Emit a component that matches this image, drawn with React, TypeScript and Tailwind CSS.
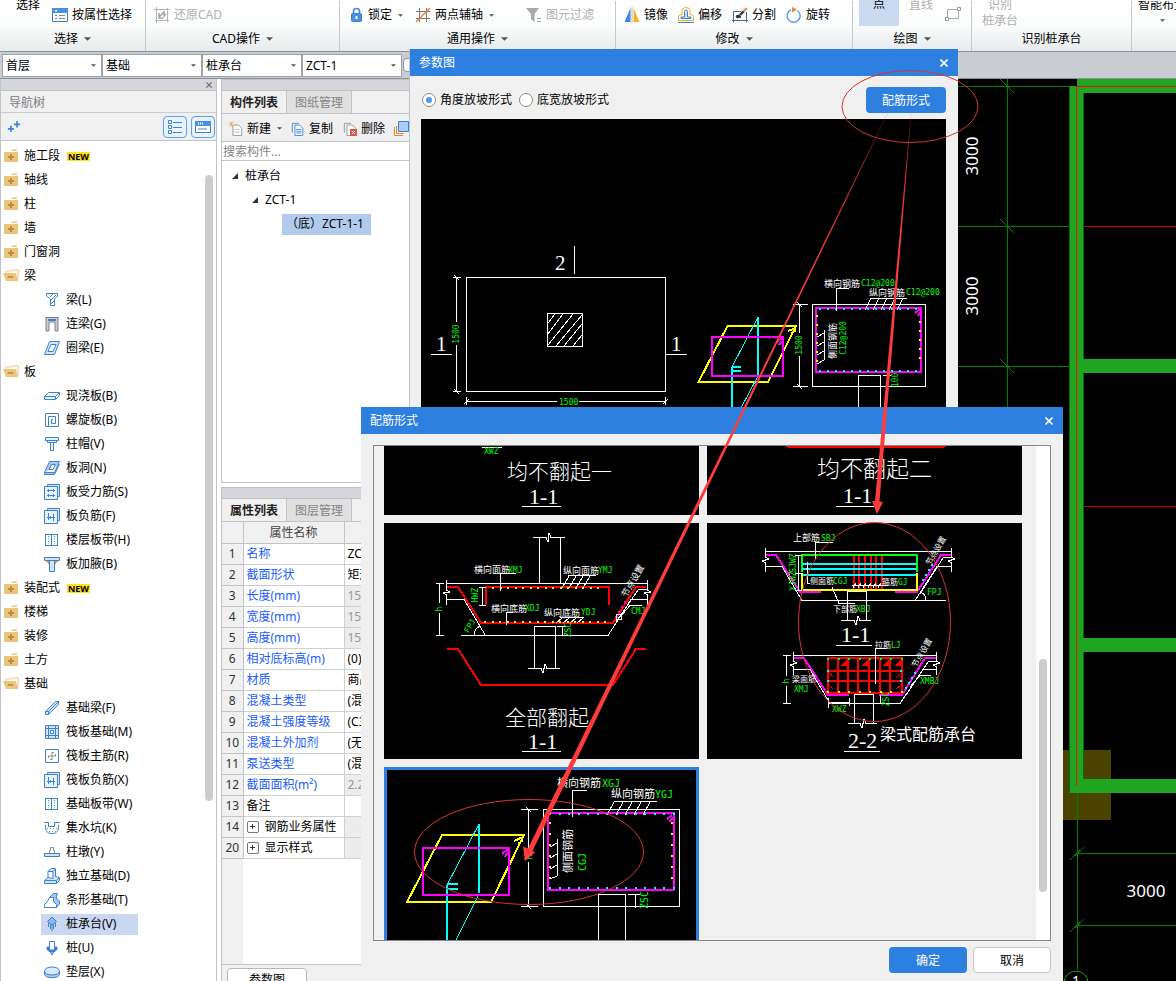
import type { ReactNode } from "react";
import clsx from "clsx";

const BLUE = "#3b82d0";
const PALE = "#d3e4f8";

function Icon({ children, size = 16, className }: { children: ReactNode; size?: number; className?: string }) {
  return (
    <svg
      width={size}
      height={size}
      viewBox="0 0 16 16"
      fill="none"
      stroke={BLUE}
      className={clsx("shrink-0", className)}
      aria-hidden
    >
      {children}
    </svg>
  );
}

function Caret({ small }: { small?: boolean }) {
  return (
    <svg width={small ? 5 : 7} height={small ? 3 : 4} viewBox="0 0 8 4" className="shrink-0" aria-hidden>
      <path d="M0 0H8L4 4Z" fill="#555" />
    </svg>
  );
}

function Close({ size = 8 }: { size?: number }) {
  return (
    <svg width={size} height={size} viewBox="0 0 8 8" stroke="currentColor" strokeWidth="1.6" aria-hidden>
      <path d="M.5 .5L7.5 7.5M7.5 .5L.5 7.5" />
    </svg>
  );
}

/* ---------- ribbon ---------- */

function Tool({ icon, label, menu, disabled }: { icon: ReactNode; label: string; menu?: boolean; disabled?: boolean }) {
  return (
    <button className={clsx("flex h-7 items-center gap-1 whitespace-nowrap", disabled && "text-[#b0b0b0]")}>
      {icon}
      {label}
      {menu && (
        <span className="ml-0.5">
          <Caret small />
        </span>
      )}
    </button>
  );
}

function Group({
  label,
  menu = true,
  width,
  children,
}: {
  label?: string;
  menu?: boolean;
  width: string;
  children: ReactNode;
}) {
  return (
    <section className={clsx("flex shrink-0 flex-col border-r border-[#c6c8ca]", width)}>
      <div className="flex h-7 items-start">{children}</div>
      {label && (
        <button className="flex h-5 items-center justify-center gap-1.5">
          {label}
          {menu && <Caret />}
        </button>
      )}
    </section>
  );
}

function Ribbon() {
  return (
    <header className="flex h-[51px] shrink-0 overflow-hidden bg-linear-to-b from-white via-[#fbfcfc] to-[#e6ebeb] pt-px">
      <Group label="选择" width="w-[146px]">
        <button className="-mt-1.5 mr-3 ml-4 h-5">选择</button>
        <Tool
          label="按属性选择"
          icon={
            <Icon>
              <path d="M.5 1.5H15.5V14.5H.5Z" fill="#fff" />
              <path d="M0 1H16V6H0Z" fill="#4a90e2" stroke="none" />
              <path d="M2.500 3L5.500 3L4 5Z" fill="#fff" stroke="none" />
              <path d="M3 8.500H5M7 8.500H13M3 11.500H5M7 11.500H13" stroke="#888" />
            </Icon>
          }
        />
      </Group>
      <Group label="CAD操作" width="w-[194px]">
        <div className="pl-2">
          <Tool
            disabled
            label="还原CAD"
            icon={
              <Icon>
                <path d="M2.500 0V16M0 2.500H16M13.500 1V15M1 13.500H15" stroke="#b5b5b5" />
                <path d="M5 10L10 5V9L12 7M5 6V11H9" stroke="#a5a5a5" strokeWidth="1.5" />
              </Icon>
            }
          />
        </div>
      </Group>
      <Group label="通用操作" width="w-[276px]">
        <div className="flex gap-3 pl-2">
          <Tool
            menu
            label="锁定"
            icon={
              <Icon>
                <path d="M5.500 7V4.500a3 3 0 0 1 6 0V7" stroke="#4a86d8" strokeWidth="1.6" />
                <rect x="3.500" y="6.500" width="10" height="8" rx="1" fill="#4a8fe2" stroke="#3b7fd0" />
                <path d="M8.500 9V12" stroke="#fff" strokeWidth="2" />
              </Icon>
            }
          />
          <Tool
            menu
            label="两点辅轴"
            icon={
              <Icon>
                <path d="M4.500 1V15M11.500 1V15M1 4.500H15M1 11.500H15" stroke="#777" />
                <path d="M1 15L15 1" stroke="#e8833a" strokeWidth="1.4" />
              </Icon>
            }
          />
          <div className="pl-5">
            <Tool
              disabled
              label="图元过滤"
              icon={
                <Icon>
                  <path d="M0 1H13L8.500 7V15L5 12V7Z" fill="#a9a9a9" stroke="none" />
                  <path d="M11 11.500H15M11 14.500H15" stroke="#a9a9a9" />
                </Icon>
              }
            />
          </div>
        </div>
      </Group>
      <Group label="修改" width="w-[237px]">
        <div className="flex gap-2.5 pl-2">
          <Tool
            label="镜像"
            icon={
              <Icon>
                <path d="M6.500 1V15H.500Z" fill="#3f87dc" stroke="none" />
                <path d="M9.500 1V15H15.500Z" fill="#f7b128" stroke="none" />
                <path d="M8 0V16" stroke="#bbb" />
              </Icon>
            }
          />
          <Tool
            label="偏移"
            icon={
              <Icon>
                <path d="M.5 13.500V9.500Q.500 7.500 4 7.500V4a4 3.500 0 0 1 8 0V7.500Q15.500 7.500 15.500 9.500V13.500Z" stroke="#f2ab27" />
                <path d="M3 11.500V10H6.500V4.500a1.500 1.500 0 0 1 3 0V10H13V11.500Z" fill={PALE} />
                <path d="M0 15.500H16" />
              </Icon>
            }
          />
          <Tool
            label="分割"
            icon={
              <Icon>
                <path d="M9 4.500H1.500V13.500H14.500V5" stroke="#44679e" />
                <path d="M0 13.500H16M1.500 12V15.500M14.500 12V15.500" stroke="#44679e" />
                <path d="M4 9L7 8L9 10L5 11Z" fill="#333" stroke="#333" />
                <path d="M8 8L12 4" stroke="#333" strokeWidth="2.400" />
                <path d="M11.500 4.500L15 1" stroke="#d9946a" strokeWidth="2.400" />
              </Icon>
            }
          />
          <Tool
            label="旋转"
            icon={
              <Icon>
                <path d="M11.500 3.500A6.500 6.500 0 1 1 5 2.800" stroke="#5a9be4" strokeWidth="1.400" />
                <path d="M6 0L11 2.500L6 5.500Z" fill="#f08a24" stroke="none" />
              </Icon>
            }
          />
        </div>
      </Group>
      <Group label="绘图" width="w-[119px]">
        <button className="-mt-px ml-1.5 flex h-[26px] w-10 items-start justify-center bg-[#c9d9f0]">
          <span className="-mt-1 h-5">点</span>
        </button>
        <button className="-mt-1.5 ml-2.5 h-5 text-[#b0b0b0]">直线</button>
        <Icon className="mt-[5px] ml-3">
          <path d="M2.500 3.500H13.500V12.500H2.500Z" stroke="#aaa" />
          <path d="M12.500 1.500H15.500V4.500H12.500ZM.500 11.500H3.500V14.500H.500Z" fill="#fff" stroke="#999" />
        </Icon>
      </Group>
      <Group label="识别桩承台" menu={false} width="w-[160px]">
        <button className="-mt-1 ml-2.5 leading-4 text-[#b0b0b0]">
          识别
          <br />
          桩承台
        </button>
      </Group>
      <section className="flex flex-1 flex-col items-start overflow-hidden pl-1.5">
        <button className="-mt-1.5 h-5 whitespace-nowrap">智能布置</button>
        <span className="mt-1 ml-[22px]">
          <Caret small />
        </span>
      </section>
    </header>
  );
}

function Pick({ label, value }: { label: string; value: string }) {
  return (
    <div className="relative w-[100px]">
      <select
        aria-label={label}
        className="block h-[23px] w-full appearance-none border border-[#9fa2a6] bg-white pt-px pl-[3px] text-black"
        defaultValue={value}
      >
        <option>{value}</option>
      </select>
      <span className="pointer-events-none absolute top-2.5 right-1.5 flex">
        <Caret small />
      </span>
    </div>
  );
}

/* ---------- navigation tree ---------- */

const slabBars = (d: string) => (
  <>
    <path d="M3.500 2.500V.5H15.500V12.500H13.500" fill={PALE} />
    <path d="M.5 2.500H13.500V15.500H.5Z" fill="#eaf3fd" />
    <path d={d} />
  </>
);

const strip = (
  <>
    <path d="M1 2.500H14M1 13.500H14M1.500 3V13M7.500 3V13M13.500 3V13" fill={PALE} />
    <path d="M4.500 4V12M10.500 4V12" strokeDasharray="1 1.500" />
  </>
);

const icons: Record<string, ReactNode> = {
  beam: <path d="M2.500 1.500H13.500V4L10.500 7V13.500H6.500V7L2.500 4ZM6 5L9 2M7 12L10 9M7 8L12 3" />,
  link: (
    <>
      <path d="M2 1.500H14V15H11V6H5V15H2Z" fill="#c9ccd1" stroke="#7c838c" />
      <path d="M4 4H12" strokeWidth="2" />
    </>
  ),
  ring: (
    <>
      <path d="M5.500 1.500H15.500L10.500 14.500H.5Z" fill={PALE} />
      <path d="M7 4.500H12L9 11.500H4Z" fill="#fff" />
    </>
  ),
  slab: <path d="M.5 8.500L4.500 4.500H15.500L11.500 8.500ZM.5 8.500V11.500H11.500V8.500M11.500 11.500L15.500 7.500V4.500" fill="#eaf3fd" />,
  spiral: <path d="M1.500 1.500H14.500V14.500H4.500V4.500H11.500V11.500H7.500V7.500H9M1.500 1.500V14.500H4" />,
  cap: <path d="M1.500 1.500H14.500V4.500H1.500ZM3.500 4.500V6.500H12.500V4.500M6.500 6.500V14.500H9.500V6.500" fill="#eaf3fd" />,
  hole: (
    <>
      <path d="M5.500 1.500H15.500L10.500 12.500H.5ZM.5 12.500V14.500H10.500L15.500 4" fill="#a9c8ee" />
      <path d="M7.500 4.500H11.500L9 9.500H5Z" fill="#fff" />
    </>
  ),
  rebar: slabBars("M3 6.500H11M3 11.500H11M4.500 5V8M9.500 5V8M4.500 10V13M9.500 10V13"),
  neg: slabBars("M4.500 5V12M9.500 6V13M3 9.500H11M6.500 8V11"),
  strip,
  haunch: (
    <>
      <path d="M2 5H14L9 11H7Z" fill="#f08a24" stroke="none" />
      <path d="M.5 1.500H15.500V4.500H.5ZM5.500 4.500V15.500H10.500V4.500" fill={PALE} />
    </>
  ),
  fbeam: <path d="M1.500 11.500L11.500 1.500H14.500V4.500L4.500 14.500H1.500ZM1.500 11.500H4.500V14.500M4.500 11.500L14.500 1.500" fill={PALE} />,
  raft: (
    <>
      <path d="M1.500 1.500H14.500V14.500H1.500ZM4.500 1V15M11.500 1V15M1 4.500H15M1 11.500H15" fill={PALE} />
      <path d="M6.500 6.500H9.500V9.500H6.500Z" fill="#fff" />
    </>
  ),
  main: (
    <>
      <path d="M1.500 1.500H14.500V14.500H1.500Z" />
      <path d="M8 4V12M4 8H12M8 4.500H10M6 11.500H8M4.500 8V10M11.500 6V8" stroke="#8a9096" />
    </>
  ),
  pit: (
    <>
      <path d="M0 2.500H4.500V6.500H10.500V2.500H16M1.500 5V7C2 13 5 13.500 8 13.500S14 13 14.500 7V5" />
      <path d="M3 8.500H14M5 11.500H12" strokeDasharray="1 2" stroke="#888" />
    </>
  ),
  pier: (
    <>
      <path d="M5.500 9V6.500H6.500V3.500H9.500V6.500H10.500V9" stroke="#8a9096" />
      <path d="M.5 9.500H15.500V12.500H.5Z" fill={PALE} />
    </>
  ),
  iso: <path d="M.5 12.500L4 9.500V3.500L7 .500H11.500V8.500L15.500 9.500V12.500L12.500 15.500H.5ZM4 9.500L9 10.500V3.500H4M9 3.500L11.500 1M.5 12.500H12.500V15M12.500 12.500L15 10" fill={PALE} />,
  stripf: (
    <>
      <path d="M5.500 5.500L9.500 1.500H13.500L12 6L15.500 9V12L12.500 15.500" fill="#a9c8ee" />
      <path d="M.5 15.500V12.500L3.500 9.500L5.500 5.500H9.500V9.500L12.500 12.500V15.500Z" fill="#fff" />
    </>
  ),
  pilecap: (
    <>
      <path d="M8 1L12.500 5.500L8 9L3.500 5.500Z" fill="#8fb8ea" />
      <path d="M8 9V15M4.500 7V11M11.500 7V11M6.500 8V13M9.500 8V13" />
    </>
  ),
  pile: (
    <>
      <path d="M5.500 1.500H10.500V10L8 15L5.500 10Z" fill="#fff" />
      <path d="M3 7H5V10H11V7H13V9.500L10 12H6L3 9.500Z" fill={BLUE} />
    </>
  ),
  cushion: (
    <>
      <path d="M.5 7V10C.5 15 15.500 15 15.500 10V7" fill="#a9c8ee" />
      <ellipse cx="8" cy="7" rx="7.500" ry="4" fill="#dbe9fa" />
    </>
  ),
};

type Row = { label: string; icon?: string; open?: boolean; fresh?: boolean; active?: boolean };

const navRows: Row[] = [
  { label: "施工段", fresh: true },
  { label: "轴线" },
  { label: "柱" },
  { label: "墙" },
  { label: "门窗洞" },
  { label: "梁", open: true },
  { label: "梁(L)", icon: "beam" },
  { label: "连梁(G)", icon: "link" },
  { label: "圈梁(E)", icon: "ring" },
  { label: "板", open: true },
  { label: "现浇板(B)", icon: "slab" },
  { label: "螺旋板(B)", icon: "spiral" },
  { label: "柱帽(V)", icon: "cap" },
  { label: "板洞(N)", icon: "hole" },
  { label: "板受力筋(S)", icon: "rebar" },
  { label: "板负筋(F)", icon: "neg" },
  { label: "楼层板带(H)", icon: "strip" },
  { label: "板加腋(B)", icon: "haunch" },
  { label: "装配式", fresh: true },
  { label: "楼梯" },
  { label: "装修" },
  { label: "土方" },
  { label: "基础", open: true },
  { label: "基础梁(F)", icon: "fbeam" },
  { label: "筏板基础(M)", icon: "raft" },
  { label: "筏板主筋(R)", icon: "main" },
  { label: "筏板负筋(X)", icon: "neg" },
  { label: "基础板带(W)", icon: "strip" },
  { label: "集水坑(K)", icon: "pit" },
  { label: "柱墩(Y)", icon: "pier" },
  { label: "独立基础(D)", icon: "iso" },
  { label: "条形基础(T)", icon: "stripf" },
  { label: "桩承台(V)", icon: "pilecap", active: true },
  { label: "桩(U)", icon: "pile" },
  { label: "垫层(X)", icon: "cushion" },
];

function Folder({ open }: { open?: boolean }) {
  return (
    <Icon>
      {open ? (
        <>
          <path d="M3 5V3H8L9 2H15V12" fill="#fff" stroke="#ecc47c" />
          <path d="M0 5H13L15 13H3Z" fill="#ecc47c" stroke="none" />
          <path d="M5 9H10" stroke="#a8803a" strokeWidth="1.400" />
        </>
      ) : (
        <>
          <path d="M1 4H15V14H1Z" fill="#ecc47c" stroke="none" />
          <path d="M8 3L9 1.500H14V3Z" fill="#ecc47c" stroke="none" />
          <path d="M5 9H11M8 6V12" stroke="#b98f45" strokeWidth="2" />
        </>
      )}
    </Icon>
  );
}

function NavTree() {
  return (
    <aside className="flex w-[217px] shrink-0 flex-col border-x border-[#c0c3c8] bg-[#f0f0f0]">
      <div className="flex h-3 shrink-0 items-center justify-end border-b border-[#c0c3c8] bg-[#d4d6db] pr-1 text-[#6d7075]">
        <button aria-label="关闭">
          <Close size={6} />
        </button>
      </div>
      <h2 className="h-[22px] shrink-0 border-b border-[#c9ccd1] pl-2 leading-[23px] text-[#7a7d82]">导航树</h2>
      <div className="flex h-7 shrink-0 items-center border-b border-[#c0c3c8] pl-1.5">
        <Icon size={14} className="mr-auto">
          <path d="M1 10H8M4.500 6.500V13.500M8 5H15M11.500 1.500V8.500" stroke="#3f82d6" strokeWidth="2" />
        </Icon>
        <button aria-label="列表" className="flex h-[22px] w-6 items-center justify-center rounded-sm border border-[#5aa2ee] bg-[#e9f3fe]">
          <Icon>
            <path d="M1.500 1.500H4.500V4.500H1.500ZM1.500 6.500H4.500V9.500H1.500ZM1.500 11.500H4.500V14.500H1.500ZM6 3.500H15M6 8.500H15M6 13.500H15" />
          </Icon>
        </button>
        <button aria-label="分组" className="mr-px ml-1 flex h-[22px] w-6 items-center justify-center rounded-sm border border-[#5aa2ee] bg-[#e9f3fe]">
          <Icon>
            <path d="M.5 2.500H15.500V13.500H.5Z" fill="#fff" />
            <path d="M0 2H16V7H0Z" fill="#4a90e2" stroke="none" />
            <path d="M3 4.500H8" stroke="#fff" strokeDasharray="1 1" strokeWidth="2" />
            <path d="M3 10H12" />
          </Icon>
        </button>
      </div>
      <div className="flex min-h-0 flex-1 bg-white">
        <ul className="flex-1 overflow-hidden pt-[3px]">
          {navRows.map((row, i) => (
            <li key={i} className={clsx("flex h-6 items-center", row.icon ? "pl-10" : "pl-0.5")}>
              <div
                className={clsx(
                  "flex items-center",
                  row.icon ? "h-[21px] gap-1.5 pr-[22px] pl-[3px]" : "gap-[5px]",
                  row.active && "bg-[#c8d8f0]",
                )}
              >
                {row.icon ? <Icon>{icons[row.icon]}</Icon> : <Folder open={row.open} />}
                <span className="whitespace-nowrap">{row.label}</span>
                {row.fresh && <b className="ml-0.5 bg-[#ffe11a] px-px text-[9px] leading-[9px]">NEW</b>}
              </div>
            </li>
          ))}
        </ul>
        <div className="mt-[34px] mr-[3px] h-[626px] w-2 rounded-full bg-[#cdcdcd]" />
      </div>
    </aside>
  );
}

/* ---------- component list and properties ---------- */

function Tabs({ active, other }: { active: string; other: string }) {
  return (
    <div className="flex h-[23px] shrink-0 border-b border-[#c0c3c8] bg-[#f0f0f0]">
      <button className="w-[65px] border-r border-[#c0c3c8] pt-px font-bold text-[#222]">{active}</button>
      <button className="w-[65px] border-r border-[#c0c3c8] bg-[#e0e0e0] pt-px text-[#858585]">{other}</button>
    </div>
  );
}

const props: [number, string, string, ("blue" | "fold" | "plain")?, boolean?][] = [
  [1, "名称", "ZCT-1", "blue"],
  [2, "截面形状", "矩形", "blue"],
  [3, "长度(mm)", "1500", "blue", true],
  [4, "宽度(mm)", "1500", "blue", true],
  [5, "高度(mm)", "1500", "blue", true],
  [6, "相对底标高(m)", "(0)", "blue"],
  [7, "材质", "商品混凝土", "blue"],
  [8, "混凝土类型", "(混凝土)", "blue"],
  [9, "混凝土强度等级", "(C30)", "blue"],
  [10, "混凝土外加剂", "(无)", "blue"],
  [11, "泵送类型", "(混凝土泵)", "blue"],
  [12, "截面面积(m²)", "2.25", "blue", true],
  [13, "备注", "", "plain"],
  [14, "钢筋业务属性", "", "fold", true],
  [20, "显示样式", "", "fold", true],
];

function Sheet() {
  const file = <path d="M4.500 3.500H11L14.500 7V15.500H4.500Z" fill="#fff" stroke="#8a929b" />;
  return (
    <div className="ml-1 flex w-[320px] shrink-0 flex-col">
      <section className="mb-1 flex h-[404px] shrink-0 flex-col border border-[#c0c3c8] bg-white">
        <div className="h-[11px] shrink-0 border-b border-[#c0c3c8] bg-[#d4d6db]" />
        <Tabs active="构件列表" other="图纸管理" />
        <div className="flex h-7 shrink-0 items-center border-b border-[#c0c3c8] bg-[#f0f0f0] pt-0.5 pl-[7px]">
          <button className="flex items-center gap-1">
            <Icon size={14}>
              {file}
              <path d="M6 8.500H12M6 11.500H12" stroke="#bbb" />
              <path d="M0 0L5 5M5 0L0 5M2.500 0V5" stroke="#f0a030" />
            </Icon>
            <span className="mr-0.5">新建</span>
            <Caret small />
          </button>
          <button className="ml-[9px] flex items-center gap-1">
            <Icon size={14}>
              <path d="M1.500 12V1.500H9" />
              <path d="M4.500 3.500H10L13.500 7V15.500H4.500Z" fill="#fff" />
              <path d="M6 8.500H12M6 10.500H12M6 12.500H12" />
            </Icon>
            复制
          </button>
          <button className="ml-2.5 flex items-center gap-1">
            <Icon size={14}>
              <path d="M1.500 12V1.500H9" stroke="#8a929b" />
              {file}
              <path d="M8 8H16V16H8Z" fill="#d9534f" stroke="none" />
              <path d="M10 10L14 14M14 10L10 14" stroke="#fff" />
            </Icon>
            删除
          </button>
          <Icon className="ml-2">
            <path d="M1.500 6V14.500H10M3.500 5V12.500H11" stroke="#e8833a" />
            <path d="M5.500 .5H15.500V10.500H5.500Z" fill="#a9cdf8" />
          </Icon>
        </div>
        <input
          aria-label="搜索构件"
          placeholder="搜索构件..."
          className="block h-[19px] w-full shrink-0 border-b border-[#c0c3c8] px-px placeholder:text-[#858585]"
        />
        <ul className="pt-[3px]">
          <li className="flex h-6 items-center gap-[7px] pl-2.5">
            <svg width="6" height="6" aria-hidden>
              <path d="M6 0V6H0Z" fill="#333" />
            </svg>
            桩承台
          </li>
          <li className="flex h-6 items-center gap-[7px] pl-[30px]">
            <svg width="6" height="6" aria-hidden>
              <path d="M6 0V6H0Z" fill="#333" />
            </svg>
            ZCT-1
          </li>
          <li className="flex h-6 items-center pl-[60px]">
            <span className="h-[21px] bg-[#b1cbec] pr-[7px] pl-1 leading-5">（底）ZCT-1-1</span>
          </li>
        </ul>
      </section>
      <section className="flex min-h-0 flex-1 flex-col border-x border-t border-[#c0c3c8] bg-[#f0f0f0]">
        <div className="h-[11px] shrink-0 border-b border-[#c0c3c8] bg-[#d4d6db]" />
        <Tabs active="属性列表" other="图层管理" />
        <div className="flex min-h-0 flex-1 flex-col border-b border-[#c0c3c8] bg-linear-to-r from-[#f0f0f0] from-[21px] to-white to-[21px]">
          <table className="w-full table-fixed border-collapse bg-white">
            <thead>
              <tr className="h-[21px] bg-[#f0f0f0]">
                <th className="w-[21px] border-r border-b border-[#c0c3c8] p-0" />
                <th className="w-[101px] border-r border-b border-[#c0c3c8] p-0 pt-px font-normal text-[#444]">属性名称</th>
                <th className="border-b border-[#c0c3c8] p-0 pt-px font-normal text-[#444]">属性值</th>
              </tr>
            </thead>
            <tbody>
              {props.map(([no, name, value, kind, dim]) => (
                <tr key={no} className="h-[21px]">
                  <td className="border-r border-b border-[#c0c3c8] bg-[#f0f0f0] p-0 text-center leading-5 text-[#333]">{no}</td>
                  <td
                    className={clsx(
                      "border-r border-b border-[#cfcfcf] p-0 pl-[3px] leading-5 whitespace-nowrap",
                      kind === "blue" && "text-[#1a5cff]",
                    )}
                  >
                    <span className="flex items-center gap-1.5">
                      {kind === "fold" && (
                        <button
                          aria-label={name}
                          className="flex size-3 items-center justify-center rounded-xs border border-[#777] bg-white"
                        >
                          <svg width="5" height="5" stroke="#333" aria-hidden>
                            <path d="M0 2.500H5M2.500 0V5" />
                          </svg>
                        </button>
                      )}
                      {name}
                    </span>
                  </td>
                  <td
                    className={clsx(
                      "border-b border-[#cfcfcf] p-0 pl-[3px] leading-5 whitespace-nowrap",
                      dim && "bg-[#ececec] text-[#9a9a9a]",
                    )}
                  >
                    {value}
                  </td>
                </tr>
              ))}
            </tbody>
          </table>
        </div>
        <div className="h-4 shrink-0 overflow-hidden pt-[3px] pl-[5px]">
          <button className="h-6 w-20 rounded-sm border border-[#b5b8bc] bg-white">参数图</button>
        </div>
      </section>
    </div>
  );
}

/* ---------- drawing helpers ---------- */

type LabelProps = {
  x: number;
  y: number;
  children: string;
  size?: number;
  fill?: string;
  rot?: number;
  serif?: boolean;
};

// upright labels start at x, turned ones are centred on x,y
function Label({ x, y, children, size = 9, fill = "#fff", rot, serif }: LabelProps) {
  return (
    <text
      x={x}
      y={y}
      fontSize={size}
      fill={fill}
      stroke="none"
      dominantBaseline="central"
      textAnchor={rot ? "middle" : "start"}
      transform={rot ? `rotate(${rot} ${x} ${y})` : undefined}
      className={clsx(
        serif
          ? "font-['Liberation_Serif','Noto_Sans_CJK_SC',serif]"
          : "font-['DejaVu_Sans_Mono','Noto_Sans_CJK_SC',monospace]",
        size > 20 && "font-light",
      )}
    >
      {children}
    </text>
  );
}

function Green(p: LabelProps) {
  return <Label size={8} fill="#0f0" {...p} />;
}

function Drawing({ box, children, className }: { box: string; children: ReactNode; className?: string }) {
  return (
    <svg
      viewBox={box}
      preserveAspectRatio="xMinYMin slice"
      fill="none"
      stroke="#fff"
      shapeRendering="crispEdges"
      className={clsx("block bg-black", className)}
    >
      {children}
    </svg>
  );
}

const range = (n: number) => Array.from({ length: n }, (_, i) => i);

function Dots({ x, y, n, dx = 0, dy = 0, fill }: { x: number; y: number; n: number; dx?: number; dy?: number; fill: string }) {
  return (
    <>
      {range(n).map((i) => (
        <rect key={i} x={Math.round(x + dx * i) - 1} y={Math.round(y + dy * i) - 1} width="2" height="2" fill={fill} stroke="none" />
      ))}
    </>
  );
}

function Slashes({ x, y, n, step, dx, dy }: { x: number; y: number; n: number; step: number; dx: number; dy: number }) {
  return <path d={range(n).map((i) => `M${x + step * i} ${y}l${dx} ${dy}`).join("")} />;
}

function PlanDrawing() {
  return (
    <Drawing box="421 119 525 300" className="h-[300px] w-full">
      <path d="M466.500 277.500H665.500V391.500H466.500ZM547.500 313.500H582.500V346.500H547.500Z" />
      <path d="M548 323L555 314M548 334L563 314M548 345L573 314M556 346L582 315M564 346L582 324M573 346L582 335" />
      <path d="M456.500 277V322M456.500 345V392M453 277.500H461M453 391.500H461M454 275L459 280M454 389L459 394" />
      <path d="M466 401.500H557M579 401.500H666M466.500 397V405M665.500 397V405M464 404L469 399M663 404L668 399" />
      <path d="M431 354.500H452M666 354.500H687M574.500 246V274" />
      <Green x={456} y={334} rot={-90}>1500</Green>
      <Green x={559} y={402}>1500</Green>
      <Label x={436} y={344} size={21} serif>1</Label>
      <Label x={671} y={344} size={21} serif>1</Label>
      <Label x={555} y={263} size={21} serif>2</Label>

      <path d="M727.500 326H796L768 382H698.500Z" stroke="#ff0" strokeWidth="2" />
      <path d="M796 328L788 331M796 330L791 334" stroke="#ff0" strokeWidth="2" />
      <path d="M758 317L732 367M758 376L741 408" stroke="#0ff" />
      <path d="M758 375V317M732 367V410M733 367H741M733 371H741" stroke="#0ff" strokeWidth="2" />
      <path d="M712 337H783V376H712ZM782 338L777 342M782 341L779 345" stroke="#f0f" strokeWidth="2" />

      <path d="M812.500 304.500H925.500V386.500H812.500ZM858.500 408V375.500H880.500V408M883 375.500H891" />
      <path d="M816 308H921V372H816ZM920 309L915 313M920 312L918 316" stroke="#f0f" strokeWidth="2" />
      <Dots x={820} y={309} dx={8} n={13} fill="#0ff" />
      <Dots x={820} y={371} dx={8} n={13} fill="#0ff" />
      <Dots x={817} y={316} dy={9} n={6} fill="#ff0" />
      <Dots x={920} y={322} dy={9} n={5} fill="#ff0" />
      <path d="M799.500 304V333M799.500 356V387M793 304.500H808M793 386.500H808M797 302L802 307M797 384L802 389" />
      <path d="M836.500 311V288.500H849M870 298.500H907M824.500 330V360" />
      <Slashes x={871} y={298} n={5} step={8} dx={-6} dy={12} />
      <path d="M824 333L817 337M824 342L817 346M824 351L817 355M824 360L817 364" />
      <Green x={799} y={345} rot={-90}>1500</Green>
      <Label x={824} y={284}>横向钢筋</Label>
      <Green x={861} y={283}>C12@200</Green>
      <Label x={869} y={293}>纵向钢筋</Label>
      <Green x={906} y={292}>C12@200</Green>
      <Label x={833} y={341} rot={-90}>侧面钢筋</Label>
      <Green x={843} y={338} rot={-90}>C12@200</Green>
      <Green x={895} y={380} rot={-90}>100</Green>
    </Drawing>
  );
}

function FlatOne() {
  return (
    <Drawing box="384 446 315 69" className="h-[69px] w-full">
      <path d="M482 447.500H502M522 506.500H561" />
      <Green x={484} y={451}>XWZ</Green>
      <Label x={507} y={472} size={21}>均不翻起一</Label>
      <Label x={529} y={496} size={22} serif>1-1</Label>
    </Drawing>
  );
}

function FlatTwo() {
  return (
    <Drawing box="707 446 315 69" className="h-[69px] w-full">
      <path d="M786 445L789 447H943L946 445" stroke="#f00" strokeWidth="2" />
      <path d="M836 506.500H874" />
      <Label x={817} y={469} size={23}>均不翻起二</Label>
      <Label x={843} y={495} size={22} serif>1-1</Label>
    </Drawing>
  );
}

function AllUp() {
  return (
    <Drawing box="384 523 315 236" className="h-[236px] w-full">
      <path d="M539.500 583V537.500M560.500 583V537.500M533 537.500H546L548 542L549 533L551 537.500H565" />
      <path d="M446 583.500H648M446.500 580V590L450 592L443 593L446.500 595V605M647.500 580V590L651 592L644 593L647.500 595V605" />
      <path d="M447 599.500H464L485.500 635.500M461 635.500H608L631 599.500H648M638 589.500H648M638 590L616 622" />
      <path d="M447 587H458L481 623H613L636 587H646M486 605V587H608.500V605M447 649H458L481 685H613L636 649H646" stroke="#f00" strokeWidth="2" />
      <Dots x={493} y={588} dx={7.5} n={15} fill="#ff0" />
      <Dots x={485} y={622} dx={7.5} n={17} fill="#ff0" />
      <Dots x={616} y={617} dx={3} dy={-5} n={4} fill="#f0f" />
      <path d="M439.500 583V603M439.500 613V635M436 583.500H444M436 635.500H444M482.500 587V605M479 587.500H486M479 605.500H486" />
      <path d="M516 573.500H500.500V591M568 575.500H596M513 612.500H506.500V625M560 617.500H584M642 605.500H630L619 618" />
      <circle cx="619" cy="617" r="3" />
      <Slashes x={569} y={576} n={4} step={7} dx={-7} dy={12} />
      <Slashes x={562} y={618} n={4} step={7} dx={-6} dy={5} />
      <path d="M474 635Q474 629 480 626M534.500 668V626.500H555.500V668M562.500 626V636M557 626.500H566M528 668.500H541L543 673L545 664L547 668.500H560" />
      <path d="M522 751.500H561" />
      <Label x={474} y={570}>横向面筋</Label>
      <Green x={508} y={570}>XMJ</Green>
      <Label x={563} y={571}>纵向面筋</Label>
      <Green x={598} y={570}>YMJ</Green>
      <Label x={491} y={609}>横向底筋</Label>
      <Green x={525} y={608}>XDJ</Green>
      <Label x={544} y={613}>纵向底筋</Label>
      <Green x={581} y={612}>YDJ</Green>
      <Label x={633} y={581} rot={-60}>节点设置</Label>
      <Green x={631} y={611}>CMJ</Green>
      <Green x={475} y={595} rot={-90}>HWZ</Green>
      <Green x={439} y={609} rot={-90}>h</Green>
      <Green x={470} y={626} rot={-60}>FPJ</Green>
      <Green x={568} y={630} rot={-90}>ZSC</Green>
      <Label x={505} y={718} size={21}>全部翻起</Label>
      <Label x={528} y={741} size={22} serif>1-1</Label>
    </Drawing>
  );
}

function BeamStyle() {
  return (
    <Drawing box="707 523 315 236" className="h-[236px] w-full">
      <path d="M765 551.500H952M765.500 548V557L769 559L762 561L765.500 563V572M951.500 548V557L955 559L948 561L951.500 563V572" />
      <path d="M766 555H776L800 592H821M951 555H941L917 592H895" stroke="#f0f" strokeWidth="2" />
      <path d="M765 566.500H782L802 600.500H946M915 600.500L937 566.500H952M943 557.500H951M943 558L920 594M926 600Q926 594 920 592" />
      <path d="M802 572V555H917V572" stroke="#0f0" strokeWidth="2" />
      <path d="M854 556V590M859 556V590M865 556V590M871 556V590M876 556V590M882 556V590" stroke="#f00" strokeWidth="2" />
      <path d="M802 564H917M802 569H917M802 575H917" stroke="#0ff" strokeWidth="2" />
      <path d="M802 573V590H917V573" stroke="#ff0" strokeWidth="2" />
      <Dots x={923} y={580} dx={3} dy={-5} n={4} fill="#0ff" />
      <path d="M798.500 555V591M795 555.500H802M795 573.500H802M795 590.500H802M833 542.500H815.500V559M807.500 562V583.500H810M852 585.500H888" />
      <Slashes x={856} y={583} n={6} step={5} dx={-3} dy={5} />
      <path d="M832 587L839 603.500H855M847.500 620V591.500H866.500V620M841 620.500H854L856 625L858 616L860 620.500H871M836 645.500H872" />
      <Label x={793} y={538}>上部筋</Label>
      <Green x={821} y={538}>SBJ</Green>
      <Green x={793} y={563} rot={-90}>SJWZ</Green>
      <Green x={793} y={581} rot={-90}>XJWZ</Green>
      <Label x={810} y={581} size={8}>侧面筋</Label>
      <Green x={833} y={581}>CGJ</Green>
      <Label x={882} y={582} size={8}>箍筋</Label>
      <Green x={898} y={582}>GJ</Green>
      <Label x={833} y={609} size={8}>下部筋</Label>
      <Green x={856} y={609}>XBJ</Green>
      <Label x={936} y={551} rot={-60} size={8}>节点设置</Label>
      <Green x={927} y={592}>FPJ</Green>
      <Label x={841} y={634} size={22} serif>1-1</Label>

      <path d="M793 655.500H937M793.500 652V661L797 663L790 665L793.500 667V675M936.500 652V661L940 663L933 665L936.500 667V675" />
      <path d="M794 658H804L828 695H849M936 658H925L902 695H879" stroke="#f0f" strokeWidth="2" />
      <path d="M793 669.500H810L830 703.500H900L923 669.500H937M928 661.500H936M928 662L906 695" />
      <path d="M828 658H902V693H828ZM838 658V693M848 658V693M858 658V693M869 658V693M880 658V693M890 658V693M828 671H902M828 681H902" stroke="#f00" strokeWidth="2" />
      <path d="M842 665L848 659V665ZM863 665L869 659V665ZM884 665L890 659V665ZM896 665L902 659V665ZM829 672L833 677M829 685L833 689M901 673L896 678M901 685L896 689" stroke="#f00" fill="#f00" />
      <Dots x={828} y={659} dx={10.5} n={8} fill="#0f0" />
      <Dots x={828} y={671} dx={73} n={2} fill="#0ff" />
      <Dots x={828} y={681} dx={73} n={2} fill="#0ff" />
      <Dots x={828} y={692} dx={10.5} n={8} fill="#ff0" />
      <Dots x={906} y={688} dx={3} dy={-5} n={4} fill="#0ff" />
      <path d="M786.500 655V676M786.500 686V703M783 655.500H791M783 703.500H791M887 648.500H875.500V684M828.500 698V708M849.500 698V706M828 702.500H850M931 675.500H920L910 687" />
      <path d="M880.500 695V704M854.500 723V694.500H873.500V723M848 723.500H860L862 728L864 719L866 723.500H877M844 751.500H880" />
      <Label x={875} y={645} size={8}>拉筋</Label>
      <Green x={891} y={645}>LJ</Green>
      <Label x={922} y={653} rot={-60} size={8}>节点设置</Label>
      <Label x={792} y={679} size={8}>梁面筋</Label>
      <Green x={794} y={689}>XMJ</Green>
      <Green x={786} y={681} rot={-90}>h</Green>
      <Green x={920} y={681}>XMBJ</Green>
      <Green x={832} y={709}>XWZ</Green>
      <Green x={886} y={699} rot={-90}>ZSC</Green>
      <Label x={848} y={740} size={22} serif>2-2</Label>
      <Label x={880} y={734} size={16}>梁式配筋承台</Label>
    </Drawing>
  );
}

function RingStyle() {
  return (
    <Drawing box="387 770 309 236" className="h-[236px] w-full">
      <path d="M442 835H524L491 902H407ZM523 837L514 841M523 840L518 844" stroke="#ff0" strokeWidth="2" />
      <path d="M479 824L447 885M479 894L455 942" stroke="#0ff" />
      <path d="M479 824V893M447 885V1006M448 884H458M448 889H458" stroke="#0ff" strokeWidth="2" />
      <path d="M423 848H509V895H423ZM508 849L502 854M508 852L505 857" stroke="#f0f" strokeWidth="2" />
      <path d="M543.500 809.500H679.500V906.500H543.500ZM598.500 1006V894.500H625.500V1006" />
      <path d="M548 813H674V890H548ZM672 815L667 819M673 818L669 822" stroke="#f0f" strokeWidth="2" />
      <Dots x={550} y={814} dx={9.500} n={14} fill="#0ff" />
      <Dots x={550} y={888} dx={9.500} n={14} fill="#0ff" />
      <Dots x={550} y={823} dy={11} n={6} fill="#ff0" />
      <Dots x={672} y={823} dy={11} n={6} fill="#ff0" />
      <path d="M528.500 809V852M528.500 862V907M521 809.500H538M521 906.500H538M526 807L531 812M526 904L531 909" />
      <path d="M587 790.500H572.500V817M614 801.500H657M557.500 839V876M557 843L550 847M557 854L550 858M557 865L550 869M557 876L550 879" />
      <path d="M635.500 894V908M628 894.500H640" />
      <Slashes x={614} y={802} n={5} step={9} dx={-7} dy={13} />
      <Label x={557} y={783} size={11}>横向钢筋</Label>
      <Green x={602} y={783} size={10}>XGJ</Green>
      <Label x={611} y={794} size={11}>纵向钢筋</Label>
      <Green x={655} y={794} size={10}>YGJ</Green>
      <Label x={568} y={851} rot={-90} size={11}>侧面钢筋</Label>
      <Green x={582} y={862} rot={-90} size={10}>CGJ</Green>
      <Green x={528} y={857} rot={-90} size={10}>h</Green>
      <Green x={644} y={900} rot={-90} size={10}>ZSC</Green>
    </Drawing>
  );
}

/* ---------- model space behind the dialogs ---------- */

function ModelView() {
  return (
    <div className="min-w-0 flex-1 overflow-hidden bg-black">
      <svg width="1200" height="902" viewBox="541 79 1200 902" fill="none" shapeRendering="crispEdges" className="block">
        <path d="M1063 750H1111V820H1063Z" fill="#4a4400" />
        <path d="M541 86H1077M541 226H1077M541 366H1077M1007 79V436M1077 853.500H1741M1077 925.500H1741M1077 793V970" stroke="#008000" strokeWidth="1" />
        <path d="M1000 79L1014 93M1000 219L1014 233M1000 359L1014 373M1070 860L1084 847M1070 932L1084 919" stroke="#008000" />
        <g fill="#1fa51f">
          <path d="M1077 79H1741V93H1077ZM1069 86H1084V793H1069Z" />
          <path d="M1069 359H1741V373H1069ZM1069 638H1741V652H1069ZM1069 779H1741V793H1069Z" />
        </g>
        <path d="M1069.500 86V793M1083.500 93V359M1083.500 373V638M1083.500 652V779" stroke="#0b6b0b" />
        <path d="M1084 226.500H1741M1084 506.500H1741" stroke="#d40000" />
        <path d="M1077 86.500H1741M1076.500 86V786" stroke="#f01010" />
        <circle cx="1076" cy="983" r="12" stroke="#1fa51f" shapeRendering="auto" />
        <g fill="#fff" fontSize="17" textAnchor="middle" dominantBaseline="central" className="font-['Noto_Sans',sans-serif]">
          <text x="971" y="156" transform="rotate(-90 971 156)">3000</text>
          <text x="971" y="296" transform="rotate(-90 971 296)">3000</text>
          <text x="1146" y="890">3000</text>
          <text x="1076" y="980" fontSize="14">1</text>
        </g>
      </svg>
    </div>
  );
}

/* ---------- dialogs ---------- */

function Dialog({ title, className, children }: { title: string; className: string; children: ReactNode }) {
  return (
    <div role="dialog" aria-label={title} className={clsx("absolute flex flex-col bg-[#f0f0f0]", className)}>
      <div className="flex h-[27px] shrink-0 items-center justify-between bg-[#2d7fe0] pr-2.5 pl-[9px] text-white">
        <span>{title}</span>
        <button aria-label="关闭">
          <Close />
        </button>
      </div>
      {children}
    </div>
  );
}

function SlopeRadio({ label, checked }: { label: string; checked?: boolean }) {
  return (
    <label className="flex items-center gap-1">
      <input
        type="radio"
        name="slope"
        defaultChecked={checked}
        className="grid size-3.5 appearance-none place-items-center rounded-full border border-[#8c8c8c] bg-white before:size-1.5 before:rounded-full checked:before:bg-[#4a98f7]"
      />
      {label}
    </label>
  );
}

export default function App() {
  return (
    <div className="relative flex h-screen w-full flex-col overflow-hidden bg-white font-['Noto_Sans','Noto_Sans_CJK_SC',sans-serif] text-xs text-black">
      <Ribbon />
      <div className="flex h-7 shrink-0 items-center border-y border-t-[#8d9094] border-b-[#8d9094] bg-[#c9ccd1] pl-0.5">
        <Pick label="楼层" value="首层" />
        <Pick label="分类" value="基础" />
        <Pick label="构件类型" value="桩承台" />
        <Pick label="构件" value="ZCT-1" />
        <input type="checkbox" aria-label="锁定构件" className="ml-px h-3.5 w-5 appearance-none rounded-sm border border-[#8d9094] bg-white" />
      </div>
      <main className="flex min-h-0 flex-1">
        <NavTree />
        <Sheet />
        <ModelView />
      </main>

      <Dialog title="参数图" className="top-[49px] left-[409px] h-[400px] w-[549px] border-l border-[#c0c3c8]">
        <div className="flex h-[43px] shrink-0 items-center gap-[7px] pt-1 pr-3 pl-3">
          <SlopeRadio label="角度放坡形式" checked />
          <SlopeRadio label="底宽放坡形式" />
          <button className="ml-auto h-[26px] w-20 rounded-sm bg-[#2d7fe0] pt-0.5 text-white">配筋形式</button>
        </div>
        <div className="min-h-0 flex-1 overflow-hidden pr-3 pl-[11px]">
          <PlanDrawing />
        </div>
      </Dialog>

      <Dialog title="配筋形式" className="top-[407px] bottom-0 left-[361px] w-[702px]">
        <div className="mx-3 mt-[11px] flex min-h-0 flex-1 border border-[#84878c]">
          <div className="grid flex-1 grid-cols-[315px_315px] content-start gap-2 overflow-hidden pl-2.5">
            <button aria-label="均不翻起一">
              <FlatOne />
            </button>
            <button aria-label="均不翻起二">
              <FlatTwo />
            </button>
            <button aria-label="全部翻起">
              <AllUp />
            </button>
            <button aria-label="梁式配筋承台">
              <BeamStyle />
            </button>
            <button aria-label="环式配筋承台" className="border-3 border-[#2d7fe0]">
              <RingStyle />
            </button>
          </div>
          <div className="flex w-3.5 justify-center bg-white">
            <div className="mt-[213px] h-[233px] w-2 rounded-full bg-[#cdcdcd]" />
          </div>
        </div>
        <div className="flex h-10 shrink-0 justify-end gap-1.5 pt-1.5 pr-3">
          <button className="h-[26px] w-[78px] rounded-sm bg-[#2d7fe0] pt-0.5 text-white">确定</button>
          <button className="h-[26px] w-[78px] rounded-sm border border-[#c4c6c9] bg-white pt-0.5">取消</button>
        </div>
      </Dialog>

      <svg className="pointer-events-none absolute top-0 left-0" width="1176" height="981" fill="none" aria-hidden>
        <defs>
          <linearGradient id="fade" gradientUnits="userSpaceOnUse" x1="0" y1="105" x2="0" y2="240">
            <stop offset="0" stopColor="#ff3b3b" stopOpacity="0.200" />
            <stop offset="0.500" stopColor="#ff3b3b" stopOpacity="0.800" />
            <stop offset="1" stopColor="#ff3b3b" />
          </linearGradient>
        </defs>
        <g stroke="#d93434">
          <ellipse cx="910" cy="106.500" rx="68" ry="36" />
          <ellipse cx="874.500" cy="622" rx="76" ry="99.500" />
          <ellipse cx="529" cy="852" rx="114.500" ry="52.500" />
        </g>
        <g fill="url(#fade)">
          <path d="M888.500 112L888 112L528 848.500L523 846.500L525 861L535 852.500L532.500 851Z" />
          <path d="M911.500 112L911 112L875 501L872 501L877 514L883 502L879.500 501.500Z" />
        </g>
      </svg>
    </div>
  );
}
